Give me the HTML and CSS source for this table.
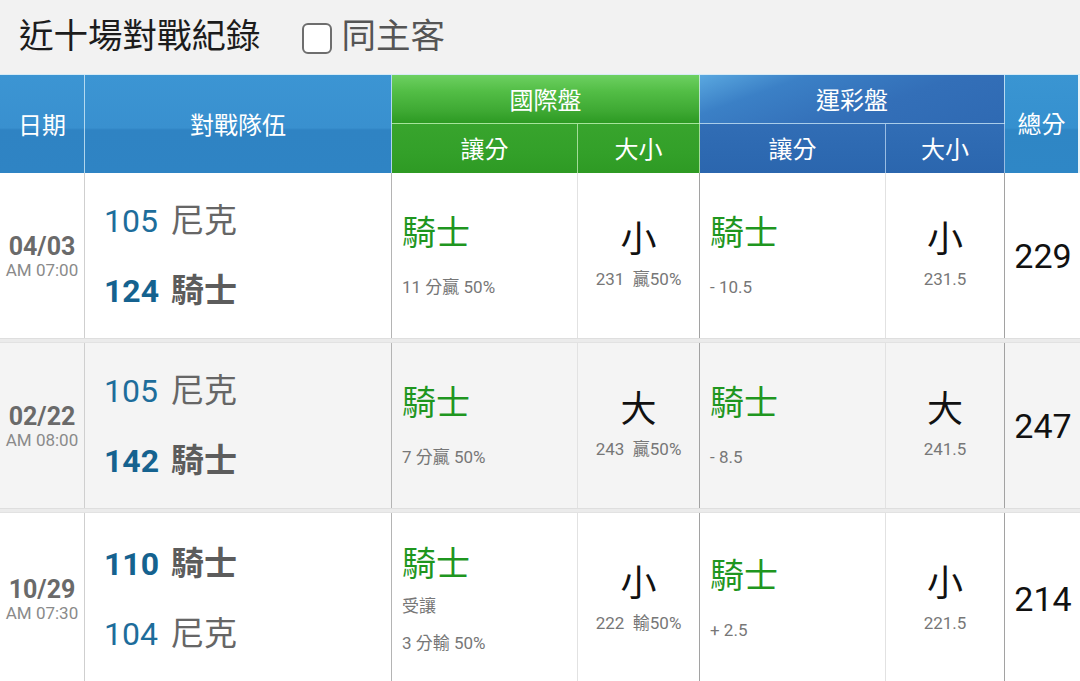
FILE: index.html
```html
<!DOCTYPE html>
<html lang="zh-Hant">
<head>
<meta charset="utf-8">
<title>近十場對戰紀錄</title>
<link rel="stylesheet" href="styles.css">
</head>
<body>
<div class="page">
  <div class="topbar">
    <h1 class="title">近十場對戰紀錄</h1>
    <label class="toggle"><span class="box"></span><span class="toggle-text">同主客</span></label>
  </div>

  <div class="thead">
    <div class="th th-blue th-date">日期</div>
    <div class="th th-blue th-teams">對戰隊伍</div>
    <div class="th th-green-top th-intl">國際盤</div>
    <div class="th th-navy-top th-lottery">運彩盤</div>
    <div class="th th-total">總分</div>
    <div class="th th-green-sub th-a">讓分</div>
    <div class="th th-green-sub th-b">大小</div>
    <div class="th th-navy-sub th-c">讓分</div>
    <div class="th th-navy-sub th-d">大小</div>
  </div>

  <div class="row">
    <div class="cell c-date"><div class="date">04/03</div><div class="time">AM 07:00</div></div>
    <div class="cell c-teams">
      <div class="team"><span class="score">105</span><span class="name">尼克</span></div>
      <div class="team win"><span class="score">124</span><span class="name">騎士</span></div>
    </div>
    <div class="cell c-spread">
      <div class="pick">騎士</div>
      <div class="sub sub-first">11 分贏 50%</div>
    </div>
    <div class="cell c-ou">
      <div class="ou">小</div>
      <div class="sub">231&nbsp;&nbsp;贏50%</div>
    </div>
    <div class="cell c-spread">
      <div class="pick">騎士</div>
      <div class="sub sub-first">- 10.5</div>
    </div>
    <div class="cell c-ou">
      <div class="ou">小</div>
      <div class="sub">231.5</div>
    </div>
    <div class="cell c-total">229</div>
  </div>
  <div class="sep"></div>

  <div class="row alt">
    <div class="cell c-date"><div class="date">02/22</div><div class="time">AM 08:00</div></div>
    <div class="cell c-teams">
      <div class="team"><span class="score">105</span><span class="name">尼克</span></div>
      <div class="team win"><span class="score">142</span><span class="name">騎士</span></div>
    </div>
    <div class="cell c-spread">
      <div class="pick">騎士</div>
      <div class="sub sub-first">7 分贏 50%</div>
    </div>
    <div class="cell c-ou">
      <div class="ou">大</div>
      <div class="sub">243&nbsp;&nbsp;贏50%</div>
    </div>
    <div class="cell c-spread">
      <div class="pick">騎士</div>
      <div class="sub sub-first">- 8.5</div>
    </div>
    <div class="cell c-ou">
      <div class="ou">大</div>
      <div class="sub">241.5</div>
    </div>
    <div class="cell c-total">247</div>
  </div>
  <div class="sep"></div>

  <div class="row last">
    <div class="cell c-date"><div class="date">10/29</div><div class="time">AM 07:30</div></div>
    <div class="cell c-teams">
      <div class="team win"><span class="score">110</span><span class="name">騎士</span></div>
      <div class="team"><span class="score">104</span><span class="name">尼克</span></div>
    </div>
    <div class="cell c-spread">
      <div class="pick">騎士</div>
      <div class="sub sub-tight">受讓</div>
      <div class="sub sub-next">3 分輸 50%</div>
    </div>
    <div class="cell c-ou">
      <div class="ou">小</div>
      <div class="sub">222&nbsp;&nbsp;輸50%</div>
    </div>
    <div class="cell c-spread">
      <div class="pick">騎士</div>
      <div class="sub sub-first">+ 2.5</div>
    </div>
    <div class="cell c-ou">
      <div class="ou">小</div>
      <div class="sub">221.5</div>
    </div>
    <div class="cell c-total">214</div>
  </div>
</div>
</body>
</html>
```

FILE: styles.css
```css
* { box-sizing: border-box; }

html, body {
  margin: 0;
  padding: 0;
  background: #ffffff;
  overflow: hidden;
}

body {
  font-family: Roboto, "Noto Sans CJK TC", "Noto Sans", sans-serif;
  color: #222;
}

.page {
  width: 1080px;
  height: 681px;
  overflow: hidden;
}

/* top bar */
.topbar {
  height: 74px;
  background: #f2f2f2;
  display: flex;
  align-items: center;
  padding-left: 19px;
  padding-bottom: 2px;
}

.title {
  margin: 0;
  font-size: 34.5px;
  font-weight: 400;
  color: #1c1c1c;
  line-height: 40px;
}

.toggle {
  display: flex;
  align-items: center;
  margin-left: 41px;
}

.box {
  width: 30px;
  height: 31px;
  border: 2px solid #6e6e6e;
  border-radius: 6px;
  background: #fff;
  margin-top: 5px;
}

.toggle-text {
  margin-left: 10px;
  font-size: 34.5px;
  color: #555;
  line-height: 40px;
}

/* header */
.thead {
  display: grid;
  grid-template-columns: 85px 307px 186px 122px 186px 119px 75px;
  grid-template-rows: 49px 49px;
  border-top: 1px solid #d6ebf6;
}

.th {
  display: flex;
  align-items: center;
  justify-content: center;
  color: #fff;
  font-size: 24px;
  line-height: 1;
  border-right: 1px solid rgba(220, 240, 250, 0.75);
}

.th-date { grid-column: 1; grid-row: 1 / span 2; padding-top: 4px; }
.th-teams { grid-column: 2; grid-row: 1 / span 2; padding-top: 4px; }
.th-intl { grid-column: 3 / span 2; grid-row: 1; padding-top: 4px; }
.th-lottery { grid-column: 5 / span 2; grid-row: 1; padding-top: 4px; }
.th-total { grid-column: 7; grid-row: 1 / span 2; padding-top: 2px; border-right: 2px solid #e6f2f8; }
.th-a { grid-column: 3; grid-row: 2; }
.th-b { grid-column: 4; grid-row: 2; }
.th-c { grid-column: 5; grid-row: 2; }
.th-d { grid-column: 6; grid-row: 2; }

.th-blue {
  background: linear-gradient(to bottom, #3c95d3 0%, #3990cf 54%, #2f83c3 56%, #2f84c4 100%);
}

.th-total {
  background: linear-gradient(to bottom, #3a95d2 0%, #3590cf 54%, #2f86c5 56%, #2f87c6 100%);
}

.th-green-top {
  background: linear-gradient(to bottom, #6dd061 0%, #52bd45 35%, #3ea933 75%, #2d9a23 100%);
  border-bottom: 1px solid #a6e49b;
}

.th-green-sub {
  background: linear-gradient(to bottom, #38a42d 0%, #33a029 60%, #2e9a24 100%);
  border-right-color: rgba(190, 235, 180, 0.8);
  padding-top: 2px;
}

.th-navy-top {
  background: linear-gradient(160deg, #5aa8e0 0%, #3b80c6 25%, #336fb8 60%, #2f6ab3 100%);
  border-bottom: 1px solid #a9cdea;
}

.th-navy-sub {
  background: linear-gradient(to bottom, #316db5 0%, #2d69b1 60%, #2b66ae 100%);
  border-right-color: rgba(180, 210, 240, 0.8);
  padding-top: 2px;
}

/* body rows */
.row {
  display: grid;
  grid-template-columns: 85px 307px 186px 122px 186px 119px 75px;
  height: 165px;
  background: #fff;
}

.row.alt { background: #f4f4f4; }
.row.last { height: 172px; }

.sep {
  height: 5px;
  background: #ebebeb;
  border-top: 1px solid #dedede;
  border-bottom: 1px solid #e2e2e2;
}

.cell {
  display: flex;
  flex-direction: column;
  justify-content: center;
  border-right: 1px solid #a2a2a2;
}

.c-date {
  align-items: center;
  border-right-color: #cfcfcf;
  padding-top: 2px;
}

.date {
  font-size: 25px;
  font-weight: 700;
  color: #6a6a6a;
  line-height: 26px;
}

.time {
  font-size: 17px;
  color: #8a8a8a;
  line-height: 20px;
}

.c-teams {
  padding-left: 19px;
  border-right-color: #b4b4b4;
}

.team {
  display: flex;
  align-items: baseline;
  font-size: 32px;
  line-height: 36px;
}

.team + .team { margin-top: 34px; }

.score {
  color: #1d6d9b;
  width: 67px;
}

.name {
  color: #666;
  font-size: 33px;
}

.team.win { font-weight: 700; }
.team.win .score { color: #15628f; }
.team.win .name { color: #5c5c5c; }

.c-spread {
  padding-left: 10px;
  padding-bottom: 2px;
  border-right-color: #e2e2e2;
}

.pick {
  font-size: 34px;
  line-height: 40px;
  color: #1f961f;
}

.sub {
  font-size: 17px;
  line-height: 20px;
  color: #777;
}

.sub-first { margin-top: 24px; }
.sub-tight { margin-top: 12px; }
.sub-next { margin-top: 17px; }

.c-ou {
  align-items: center;
  padding-bottom: 4px;
}

.ou {
  font-size: 36px;
  line-height: 44px;
  color: #111;
}

.ou + .sub { margin-top: 7px; }

.c-total {
  align-items: center;
  font-size: 34px;
  color: #111;
  border-right: none;
  padding-left: 1px;
}
```
